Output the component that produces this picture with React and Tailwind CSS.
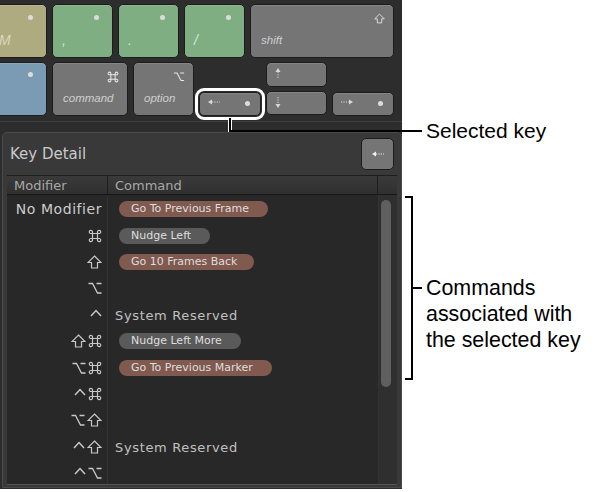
import React from 'react'

const uiFont = { fontFamily: '"DejaVu Sans", sans-serif' }

const CommandIcon = ({ className = 'w-[14px] h-[14px]' }) => (
  <svg viewBox="0 0 14 14" className={className} fill="none" stroke="currentColor" strokeWidth="1.2">
    <path d="M4.5 4.5h5v5h-5z M4.5 4.5H3A1.6 1.6 0 1 1 4.5 3z M9.5 4.5H11A1.6 1.6 0 1 0 9.5 3z M4.5 9.5H3A1.6 1.6 0 1 0 4.5 11z M9.5 9.5H11A1.6 1.6 0 1 1 9.5 11z" />
  </svg>
)

const ShiftIcon = ({ className = 'w-[15px] h-[14px]' }) => (
  <svg viewBox="0 0 15 14" className={className} fill="none" stroke="currentColor" strokeWidth="1.2">
    <path d="M7.5 1L14 7.5H10.5V13H4.5V7.5H1z" strokeLinejoin="miter" />
  </svg>
)

const OptionIcon = ({ className = 'w-[14px] h-[14px]' }) => (
  <svg viewBox="0 0 14 14" className={className} fill="none" stroke="currentColor" strokeWidth="1.3">
    <path d="M0.5 2.5H4.5L9.5 12H13.5M8.5 2.5H13.5" />
  </svg>
)

const ControlIcon = () => (
  <svg viewBox="0 0 12 8" className="w-[12px] h-[8px] mb-[4px]" fill="none" stroke="currentColor" strokeWidth="1.5">
    <path d="M1 7L6 1.5L11 7" />
  </svg>
)

const ArrowLeft = ({ className = 'w-[12px] h-[6px]', color = '#d8d8d8' }) => (
  <svg viewBox="0 0 12 6" className={className}>
    <path d="M0 3L4 0.5V5.5z" fill={color} />
    <path d="M4 3H12" stroke={color} strokeWidth="1" strokeDasharray="1.2 1.2" />
  </svg>
)

const ArrowRight = () => (
  <svg viewBox="0 0 12 6" className="w-[12px] h-[6px]">
    <path d="M12 3L8 0.5V5.5z" fill="#d8d8d8" />
    <path d="M0 3H8" stroke="#d8d8d8" strokeWidth="1" strokeDasharray="1.2 1.2" />
  </svg>
)

const ArrowUp = () => (
  <svg viewBox="0 0 6 11" className="w-[6px] h-[11px]">
    <path d="M3 0L5.5 4H0.5z" fill="#d8d8d8" />
    <path d="M3 4V11" stroke="#d8d8d8" strokeWidth="1" strokeDasharray="1.2 1.2" />
  </svg>
)

const ArrowDown = () => (
  <svg viewBox="0 0 6 11" className="w-[6px] h-[11px]">
    <path d="M3 11L5.5 7H0.5z" fill="#d8d8d8" />
    <path d="M3 0V7" stroke="#d8d8d8" strokeWidth="1" strokeDasharray="1.2 1.2" />
  </svg>
)

const Dot = () => <span className="block w-[5px] h-[5px] rounded-full bg-[#dcdcdc]" />

const Key = ({ className = '', children }) => (
  <div className={`relative rounded-[5px] border border-[#1c1c1c] shadow-[inset_0_1px_0_rgba(255,255,255,0.12)] ${className}`}>
    {children}
  </div>
)

const keyLabel = 'absolute italic text-[11.5px] leading-none text-[#cfcfcf]'
const charLabel = 'absolute italic text-[14px] leading-none'

const rows = [
  { mod: <span className="text-[14px] tracking-[0.55px] text-[#cccccc]">No Modifier</span>, cmd: { text: 'Go To Previous Frame', w: 'w-[149px]', red: true } },
  { mod: <CommandIcon />, cmd: { text: 'Nudge Left', w: 'w-[91px]' } },
  { mod: <ShiftIcon />, cmd: { text: 'Go 10 Frames Back', w: 'w-[135px]', red: true } },
  { mod: <OptionIcon />, cmd: null },
  { mod: <ControlIcon />, reserved: true },
  { mod: <><ShiftIcon /><CommandIcon /></>, cmd: { text: 'Nudge Left More', w: 'w-[122px]' } },
  { mod: <><OptionIcon /><CommandIcon /></>, cmd: { text: 'Go To Previous Marker', w: 'w-[153px]', red: true } },
  { mod: <><ControlIcon /><CommandIcon /></>, cmd: null },
  { mod: <><OptionIcon /><ShiftIcon /></>, cmd: null },
  { mod: <><ControlIcon /><ShiftIcon /></>, reserved: true },
  { mod: <><ControlIcon /><OptionIcon /></>, cmd: null },
]

const Keyboard = () => (
  <div className="h-[122px] pt-[4px] bg-[#2d2d2d] flex flex-col gap-[4px] border-b border-[#3d3d3d] overflow-hidden">
    <div className="flex gap-[5px] h-[54px] ml-[-13px]">
      <Key className="w-[60px] bg-[#aeab80]">
        <span className="absolute right-[13px] top-[10px]"><Dot /></span>
        <span className={`${charLabel} left-[11px] bottom-[10px] text-[#d9d8bd]`}>M</span>
      </Key>
      <Key className="w-[61px] bg-[#7fae82]">
        <span className="absolute right-[13px] top-[10px]"><Dot /></span>
        <span className={`${charLabel} left-[9px] bottom-[10px] text-[#d5e6d6]`}>,</span>
      </Key>
      <Key className="w-[61px] bg-[#7fae82]">
        <span className="absolute right-[13px] top-[10px]"><Dot /></span>
        <span className={`${charLabel} left-[9px] bottom-[10px] text-[#d5e6d6]`}>.</span>
      </Key>
      <Key className="w-[61px] bg-[#7fae82]">
        <span className="absolute right-[13px] top-[10px]"><Dot /></span>
        <span className={`${charLabel} left-[9px] bottom-[10px] text-[#d5e6d6]`}>/</span>
      </Key>
      <Key className="w-[144px] bg-[#757575]">
        <span className="absolute right-[8px] top-[8px] text-[#e6e6e6]"><ShiftIcon className="w-[11px] h-[11px]" /></span>
        <span className={`${keyLabel} left-[10px] bottom-[11px]`}>shift</span>
      </Key>
    </div>
    <div className="flex gap-[5px] h-[54px] ml-[-13px]">
      <Key className="w-[60px] bg-[#7b9ab3]">
        <span className="absolute right-[13px] top-[9px]"><Dot /></span>
      </Key>
      <Key className="w-[76px] bg-[#757575]">
        <span className="absolute right-[8px] top-[8px] text-[#e6e6e6]"><CommandIcon className="w-[12px] h-[12px]" /></span>
        <span className={`${keyLabel} left-[10px] bottom-[11px]`}>command</span>
      </Key>
      <Key className="w-[61px] bg-[#757575]">
        <span className="absolute right-[8px] top-[8px] text-[#e6e6e6]"><OptionIcon className="w-[12px] h-[11px]" /></span>
        <span className={`${keyLabel} left-[10px] bottom-[11px]`}>option</span>
      </Key>
      <div className="flex items-end">
        <Key className="w-[62px] h-[24px] bg-[#757575]">
          <span className="absolute left-[8px] top-[6px]"><ArrowLeft /></span>
          <span className="absolute right-[10px] top-[8px]"><Dot /></span>
          <span className="absolute inset-[-5px] rounded-[9px] border-[3px] border-white" />
        </Key>
      </div>
      <div className="flex flex-col gap-[4px]">
        <Key className="w-[61px] h-[25px] bg-[#757575]">
          <span className="absolute left-[8px] top-[5px]"><ArrowUp /></span>
        </Key>
        <Key className="w-[61px] h-[24px] bg-[#757575]">
          <span className="absolute left-[8px] top-[5px]"><ArrowDown /></span>
        </Key>
      </div>
      <div className="flex items-end">
        <Key className="w-[62px] h-[24px] bg-[#757575]">
          <span className="absolute left-[8px] top-[6px]"><ArrowRight /></span>
          <span className="absolute right-[10px] top-[8px]"><Dot /></span>
        </Key>
      </div>
    </div>
  </div>
)

const KeyDetail = () => (
  <div className="mt-[10px] ml-[2px] h-[356px] flex flex-col rounded-t-[5px] border border-[#4a4a4a] bg-[#393939] px-[4px]" style={uiFont}>
    <div className="h-[42px] flex items-center justify-between pl-[3px] pr-[3px] shrink-0">
      <span className="text-[15px] text-[#c8c8c8]">Key Detail</span>
      <div className="w-[33px] h-[32px] rounded-[5px] border border-[#1c1c1c] bg-[#757575] flex items-center justify-center">
        <ArrowLeft color="#f0f0f0" />
      </div>
    </div>
    <div className="flex-1 min-h-0 flex flex-col border-y border-t-[#1e1e1e] border-b-[#555] overflow-hidden mb-[2px] bg-[#282828]">
      <div className="h-[19px] shrink-0 flex bg-gradient-to-b from-[#3a3a3a] to-[#303030] border-b border-[#171717] text-[13px] text-[#a8a8a8] leading-[20px]">
        <div className="w-[101px] pl-[7px] border-r border-[#1e1e1e]">Modifier</div>
        <div className="w-[270px] pl-[7px] border-r border-[#1e1e1e]">Command</div>
      </div>
      <div className="flex flex-1 min-h-0">
        <div className="w-[371px] shrink-0 pt-[1px]">
          {rows.map((row, i) => (
            <div key={i} className="h-[26.4px] flex items-center">
              <div className="w-[101px] pr-[5px] flex items-center justify-end gap-[2px] text-[#c8c8c8] border-r border-[#333] h-full">
                {row.mod}
              </div>
              <div className="pl-[11px] flex-1">
                {row.reserved && <span className="ml-[-4px] text-[13px] tracking-[0.65px] text-[#c0c0c0]">System Reserved</span>}
                {row.cmd && (
                  <span className={`flex items-center h-[16px] pl-[12px] pt-[1px] ${row.cmd.w} rounded-full text-[11px] text-[#dedede] ${row.cmd.red ? 'bg-[#80594f]' : 'bg-[#5a5a5a]'}`}>
                    {row.cmd.text}
                  </span>
                )}
              </div>
            </div>
          ))}
        </div>
        <div className="flex-1 bg-[#2f2f2f] border-l border-[#333] pt-[5px] pl-[2px]">
          <div className="w-[10px] h-[187px] rounded-full bg-[#5f5f5f]" />
        </div>
      </div>
    </div>
  </div>
)

export default function App() {
  return (
    <div className="relative w-[596px] h-[492px] bg-white overflow-hidden" style={{ fontFamily: '"Liberation Sans", Arial, sans-serif' }}>
      <div className="w-[402px] h-[489px] bg-[#2d2d2d]">
        <Keyboard />
        <KeyDetail />
      </div>

      {/* callouts */}
      <div className="absolute left-[229px] top-[118px] w-[2px] h-[14px] bg-black shadow-[1px_0_0_#fff,-1px_0_0_#fff]" />
      <div className="absolute left-[229px] top-[130px] w-[193px] h-[2px] bg-black" />
      <span className="absolute left-[426px] top-[119px] text-[21px] leading-[24px] text-black">Selected key</span>
      <div className="absolute left-[405px] top-[196px] w-[8px] h-[184px] border-y-2 border-r-2 border-black" />
      <div className="absolute left-[413px] top-[287px] w-[9px] h-[2px] bg-black" />
      <div className="absolute left-[426px] top-[275px] text-[21.4px] leading-[26px] text-black">
        Commands<br />associated with<br />the selected key
      </div>
    </div>
  )
}
